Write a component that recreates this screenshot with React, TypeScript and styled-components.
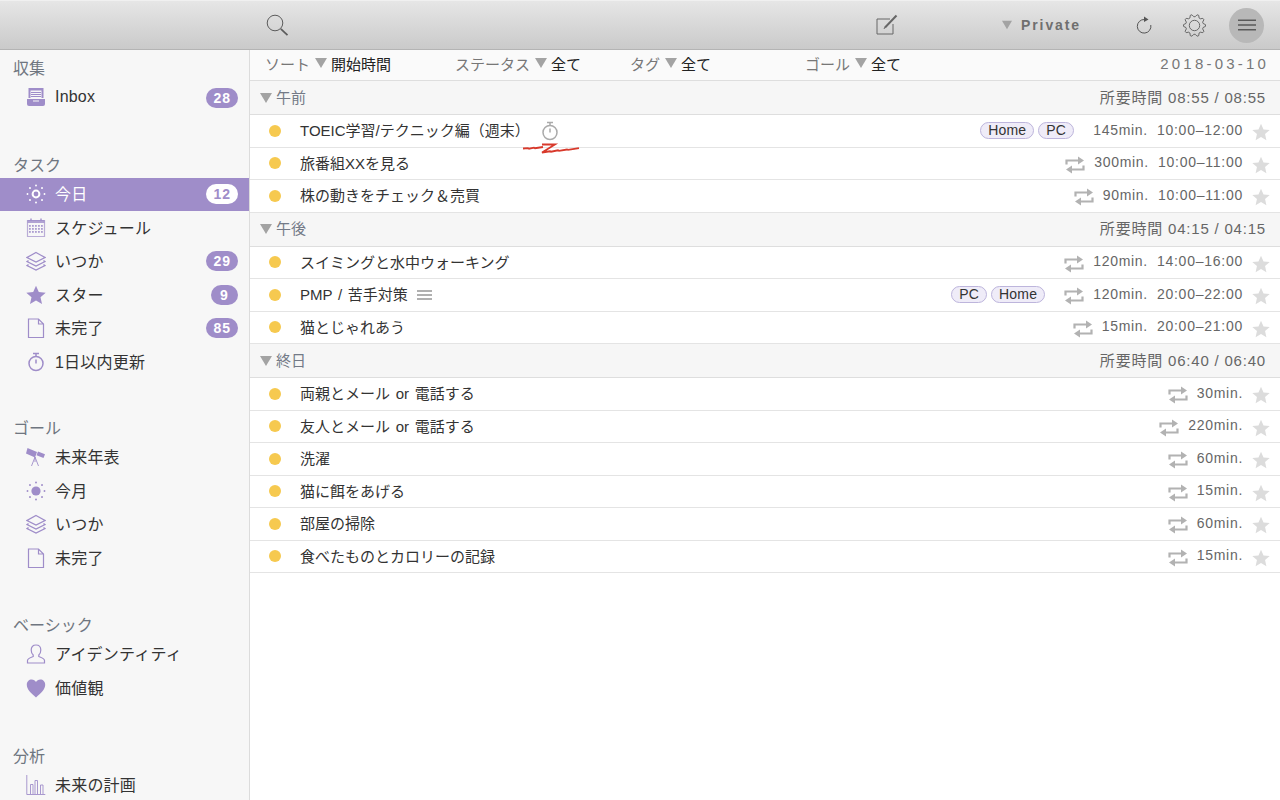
import React from 'react';
import styled, {createGlobalStyle} from 'styled-components';

const PURPLE = '#9f8dc9';
const FONT = `"Liberation Sans", "Noto Sans CJK JP", sans-serif`;

type IconName = 'inbox' | 'sun' | 'calendar' | 'layers' | 'star' | 'file' | 'timer' | 'scope' | 'sunDot' | 'user' | 'heart' | 'bars';

function NavIcon({name, color = PURPLE}: {name: IconName; color?: string}) {
  const line = {fill: 'none', stroke: color, strokeWidth: 1.2};
  return (
    <svg width="20" height="20" viewBox="0 0 20 20">
      {name === 'inbox' && (
        <>
          <path d="M2.500 0h15v11h-15z" fill={color}/>
          <path d="M4.500 2.500h11v8h-11z" fill="#f7f7f7"/>
          <path d="M5 4.500h10M5 6.500h10M5 8.500h10" stroke={color} strokeWidth={1.100}/>
          <path d="M1 11h18v5a2 2 0 0 1-2 2H3a2 2 0 0 1-2-2z" fill={color}/>
          <path d="M1 10.500h18" stroke="#f7f7f7" strokeWidth={1}/>
          <path d="M7 13h6" stroke="#f7f7f7" strokeWidth={1}/>
        </>
      )}
      {(name === 'sun' || name === 'sunDot') && (
        <>
          {name === 'sun'
            ? <circle cx="10" cy="10" r="3.400" fill="none" stroke={color} strokeWidth={2}/>
            : <circle cx="10" cy="10" r="4.600" fill={color}/>}
          {[0, 45, 90, 135, 180, 225, 270, 315].map(a => (
            <circle key={a} cx="10" cy="1.500" r="0.950" fill={color} transform={`rotate(${a} 10 10)`}/>
          ))}
        </>
      )}
      {name === 'calendar' && (
        <>
          <path d="M1.500 2.500h17v16h-17z" {...line} opacity={0.7}/>
          <path d="M1.500 2h17v3h-17z" fill={color} opacity={0.8}/>
          <path d="M5 .5v2M15 .5v2" stroke={color} strokeWidth={1.400}/>
          {[8, 11, 14].map(y => [4, 7, 10, 13, 16].map(x => (
            <rect key={`${x}-${y}`} x={x - 1} y={y - 1} width="1.800" height="1.800" fill={color} opacity={0.85}/>
          )))}
        </>
      )}
      {name === 'layers' && (
        <>
          <path d="M10 1.500L19 6.500 10 11 1 6.500z" {...line}/>
          <path d="M2.500 9.500L1 10.500 10 15l9-4.500-1.500-1M2.500 13.500L1 14.500 10 19l9-4.500-1.500-1" {...line}/>
        </>
      )}
      {name === 'star' && <path d="M10 .8l2.800 6.300 6.900.7-5.200 4.500 1.500 6.800L10 15.600l-6 3.500 1.500-6.800L.3 7.800l6.900-.7z" fill={color}/>}
      {name === 'file' && <path d="M2.500 1h10l5 5v13.500h-15zM12.500 1v5h5" {...line}/>}
      {name === 'timer' && (
        <>
          <circle cx="10" cy="11.500" r="7" fill="none" stroke={color} strokeWidth={1.500}/>
          <path d="M7 1.500h6M10 1.500v3M10 11.500V7.500" stroke={color} strokeWidth={1.500}/>
        </>
      )}
      {name === 'scope' && (
        <>
          <path d="M1.500 1l9.500 4-2 5.500L0 6.500z" fill={color}/>
          <path d="M12 4.500l7 2.800-1.500 3.700-7-2.800z" fill={color}/>
          <path d="M9 10l-3.500 9M9 10l3.500 9M9 10v5" stroke={color} strokeWidth={0.900} fill="none"/>
        </>
      )}
      {name === 'user' && <path d="M7.200 12.500V11C5.800 9.800 5.200 8 5.200 6 5.200 3 7 1 10 1s4.800 2 4.800 5c0 2-.6 3.800-2 5v1.500c2.500 1 5.700 1.800 5.700 4v2.500h-17V16.500c0-2.200 3.200-3 5.700-4z" {...line}/>}
      {name === 'heart' && <path d="M10 19.500C5 15 .8 11.500.8 6.800.8 3.500 3 1.500 5.700 1.500c1.900 0 3.400 1 4.300 2.600.9-1.600 2.400-2.600 4.300-2.600 2.700 0 4.900 2 4.900 5.300 0 4.700-4.200 8.200-9.200 12.700z" fill={color}/>}
      {name === 'bars' && <path d="M.8 0v19.500M.8 19.500h18.500M4.500 19V9.500h2.500V19M9 19V5.500h2.500V19M14.500 19V10H17v9" fill="none" stroke={color} strokeWidth={0.900}/>}
    </svg>
  );
}

function Triangle({size = 12}: {size?: number}) {
  return (
    <svg width={size} height={size - 2} viewBox="0 0 12 10">
      <path d="M0 0h12L6 10z" fill="#a3a3a3"/>
    </svg>
  );
}

function RepeatIcon() {
  return (
    <RepeatSvg width="20" height="18" viewBox="0 0 20 18">
      <path d="M1.500 8.500V4.500h12M18.500 9.500v4h-12" fill="none" stroke="#b2b2b2" strokeWidth={2.200}/>
      <path d="M13 .5L19 4.500l-6 4zM7 9.500L1 13.500l6 4z" fill="#b2b2b2"/>
    </RepeatSvg>
  );
}

function RowStar() {
  return (
    <svg width="18" height="18" viewBox="0 0 20 20">
      <path d="M10 .8l2.800 6.300 6.900.7-5.200 4.500 1.500 6.800L10 15.600l-6 3.500 1.500-6.800L.3 7.800l6.900-.7z" fill="#dcdcdc"/>
    </svg>
  );
}

function SearchIcon() {
  return (
    <svg width="23" height="23" viewBox="0 0 23 23" fill="none" stroke="#5c5c5c">
      <circle cx="9" cy="9" r="7.800" strokeWidth={1}/>
      <path d="M14.800 14.800l6.700 6.300" strokeWidth={1.700}/>
    </svg>
  );
}

function ComposeIcon() {
  return (
    <svg width="22" height="22" viewBox="0 0 22 22" fill="none" stroke="#666">
      <path d="M14 5H1v15h16V10" strokeWidth={1}/>
      <path d="M9 13.500L20.500 1.500" strokeWidth={2}/>
      <path d="M8 15l1-2" strokeWidth={1}/>
    </svg>
  );
}

function RefreshIcon() {
  return (
    <svg width="18" height="20" viewBox="0 0 18 20" fill="none">
      <path d="M9.500 4.500A6.800 6.800 0 1 0 15.800 10" stroke="#555" strokeWidth={1}/>
      <path d="M9 1.500l4.500 3L9 7z" fill="#555"/>
    </svg>
  );
}

// gear outline: a ring of rounded teeth around a plain circle
function GearIcon() {
  const teeth = 10;
  const points: string[] = [];
  for (let i = 0; i < teeth * 4; i++) {
    const r = i % 4 < 2 ? 11 : 8.800;
    const a = ((i - 0.5) / (teeth * 4)) * Math.PI * 2;
    points.push(`${(11.500 + r * Math.cos(a)).toFixed(2)},${(11.500 + r * Math.sin(a)).toFixed(2)}`);
  }
  return (
    <svg width="23" height="23" viewBox="0 0 23 23" fill="none" stroke="#5c5c5c" strokeWidth={0.900} strokeLinejoin="round">
      <polygon points={points.join(' ')}/>
      <circle cx="11.500" cy="11.500" r="5.200"/>
    </svg>
  );
}

function MenuIcon() {
  return (
    <svg width="18" height="12" viewBox="0 0 18 12">
      <path d="M0 1.200h18M0 6h18M0 10.800h18" stroke="#5a5a5a" strokeWidth={1.500}/>
    </svg>
  );
}

type NavEntry = {label: string; icon: IconName; count?: number; active?: boolean};
type NavGroup = {title: string; gap: number; items: NavEntry[]};

const NAV: NavGroup[] = [
  {title: '収集', gap: 1, items: [{label: 'Inbox', icon: 'inbox', count: 28}]},
  {title: 'タスク', gap: 33, items: [
    {label: '今日', icon: 'sun', count: 12, active: true},
    {label: 'スケジュール', icon: 'calendar'},
    {label: 'いつか', icon: 'layers', count: 29},
    {label: 'スター', icon: 'star', count: 9},
    {label: '未完了', icon: 'file', count: 85},
    {label: '1日以内更新', icon: 'timer'},
  ]},
  {title: 'ゴール', gap: 32, items: [
    {label: '未来年表', icon: 'scope'},
    {label: '今月', icon: 'sunDot'},
    {label: 'いつか', icon: 'layers'},
    {label: '未完了', icon: 'file'},
  ]},
  {title: 'ベーシック', gap: 33, items: [
    {label: 'アイデンティティ', icon: 'user'},
    {label: '価値観', icon: 'heart'},
  ]},
  {title: '分析', gap: 34, items: [{label: '未来の計画', icon: 'bars'}]},
];

type Task = {title: string; tags?: string[]; repeat?: boolean; min: string; time?: string; timer?: boolean; note?: boolean};
type TaskGroup = {name: string; total: string; tasks: Task[]};

const GROUPS: TaskGroup[] = [
  {name: '午前', total: '所要時間 08:55 / 08:55', tasks: [
    {title: 'TOEIC学習/テクニック編（週末）', tags: ['Home', 'PC'], min: '145min.', time: '10:00–12:00', timer: true},
    {title: '旅番組XXを見る', repeat: true, min: '300min.', time: '10:00–11:00'},
    {title: '株の動きをチェック＆売買', repeat: true, min: '90min.', time: '10:00–11:00'},
  ]},
  {name: '午後', total: '所要時間 04:15 / 04:15', tasks: [
    {title: 'スイミングと水中ウォーキング', repeat: true, min: '120min.', time: '14:00–16:00'},
    {title: 'PMP / 苦手対策', tags: ['PC', 'Home'], repeat: true, min: '120min.', time: '20:00–22:00', note: true},
    {title: '猫とじゃれあう', repeat: true, min: '15min.', time: '20:00–21:00'},
  ]},
  {name: '終日', total: '所要時間 06:40 / 06:40', tasks: [
    {title: '両親とメール or 電話する', repeat: true, min: '30min.'},
    {title: '友人とメール or 電話する', repeat: true, min: '220min.'},
    {title: '洗濯', repeat: true, min: '60min.'},
    {title: '猫に餌をあげる', repeat: true, min: '15min.'},
    {title: '部屋の掃除', repeat: true, min: '60min.'},
    {title: '食べたものとカロリーの記録', repeat: true, min: '15min.'},
  ]},
];

const FILTERS = [
  {label: 'ソート', value: '開始時間', width: 190},
  {label: 'ステータス', value: '全て', width: 175},
  {label: 'タグ', value: '全て', width: 175},
  {label: 'ゴール', value: '全て', width: 200},
];

export default function App() {
  return (
    <Shell>
      <GlobalStyle/>
      <Toolbar>
        <SearchSlot><SearchIcon/></SearchSlot>
        <ComposeSlot><ComposeIcon/></ComposeSlot>
        <Workspace><Triangle/>Private</Workspace>
        <RefreshSlot><RefreshIcon/></RefreshSlot>
        <GearSlot><GearIcon/></GearSlot>
        <MenuButton><MenuIcon/></MenuButton>
      </Toolbar>
      <Body>
        <Sidebar>
          {NAV.map(group => (
            <NavSection key={group.title} $gap={group.gap}>
              <NavTitle>{group.title}</NavTitle>
              {group.items.map(item => (
                <NavItem key={item.label} $active={item.active}>
                  <NavIconSlot><NavIcon name={item.icon} color={item.active ? '#fff' : PURPLE}/></NavIconSlot>
                  <NavLabel>{item.label}</NavLabel>
                  {item.count !== undefined && <Badge $active={item.active}>{item.count}</Badge>}
                </NavItem>
              ))}
            </NavSection>
          ))}
        </Sidebar>
        <Content>
          <FilterBar>
            {FILTERS.map(f => (
              <Filter key={f.label} $width={f.width}>
                <FilterLabel>{f.label}</FilterLabel>
                <Triangle/>
                <FilterValue>{f.value}</FilterValue>
              </Filter>
            ))}
            <DateText>2018-03-10</DateText>
          </FilterBar>
          {GROUPS.map(group => (
            <section key={group.name}>
              <GroupHeader>
                <GroupMark><Triangle/></GroupMark>
                <GroupName>{group.name}</GroupName>
                <GroupTotal>{group.total}</GroupTotal>
              </GroupHeader>
              {group.tasks.map(task => (
                <TaskRow key={task.title}>
                  <Dot/>
                  <TaskTitle>{task.title}</TaskTitle>
                  {task.timer && (
                    <TimerSlot>
                      <NavIcon name="timer" color="#aaa"/>
                      <Squiggle width="60" height="12" viewBox="0 0 60 12">
                        <path d="M1 6.500l5-.4 1 .6 5-1 1 .5 8-1.200M20 2.500h13L20 10.500l8-1.200 1 .4 7-1.400 1 .5 8-1.300 1 .4 11-1.800" fill="none" stroke="#d8392b" strokeWidth={1.800}/>
                      </Squiggle>
                    </TimerSlot>
                  )}
                  {task.note && <NoteLines/>}
                  <RowRight>
                    {task.tags && (
                      <Tags $spaced={task.repeat}>
                        {task.tags.map(t => <Tag key={t}>{t}</Tag>)}
                      </Tags>
                    )}
                    {task.repeat && <RepeatIcon/>}
                    <Minutes>{task.min}</Minutes>
                    {task.time && <TimeRange>{task.time}</TimeRange>}
                    <StarSlot><RowStar/></StarSlot>
                  </RowRight>
                </TaskRow>
              ))}
            </section>
          ))}
        </Content>
      </Body>
    </Shell>
  );
}

const GlobalStyle = createGlobalStyle`
  html, body {
    margin: 0;
    height: 100%;
    background: #fff;
    font-family: ${FONT};
    color: #333;
  }
`;

const Shell = styled.div`
  height: 100vh;
  display: flex;
  flex-direction: column;
  overflow: hidden;
`;

const Toolbar = styled.header`
  flex: none;
  box-sizing: border-box;
  height: 50px;
  display: flex;
  align-items: center;
  background: linear-gradient(#e6e6e6, #cacaca);
  border-top: 1px solid #f0f0f0;
  border-bottom: 1px solid #b4b4b4;
`;

const SearchSlot = styled.div`
  display: flex;
  margin-left: 266px;
`;

const ComposeSlot = styled.div`
  display: flex;
  margin-left: 587px;
  margin-right: 104px;
`;

const Workspace = styled.div`
  display: flex;
  align-items: center;
  gap: 9px;
  width: 79px;
  font-size: 14px;
  font-weight: bold;
  letter-spacing: 1.900px;
  color: #6f6f6f;
`;

const RefreshSlot = styled.div`
  display: flex;
  margin-left: 54px;
`;

const GearSlot = styled.div`
  display: flex;
  margin-left: 30px;
`;

const MenuButton = styled.div`
  display: flex;
  align-items: center;
  justify-content: center;
  width: 35px;
  height: 35px;
  margin-left: 23px;
  border-radius: 50%;
  background: #b8b8b8;
`;

const Body = styled.div`
  flex: 1;
  display: flex;
  min-height: 0;
`;

const Sidebar = styled.nav`
  flex: none;
  box-sizing: border-box;
  width: 250px;
  background: #f7f7f7;
  border-right: 1px solid #dcdcdc;
  overflow: hidden;
`;

const NavSection = styled.div<{$gap: number}>`
  margin-top: ${p => p.$gap}px;
`;

const NavTitle = styled.div`
  box-sizing: border-box;
  height: 30px;
  padding: 7px 0 0 13px;
  font-size: 16px;
  line-height: 22px;
  color: #6f7680;
`;

const NavItem = styled.div<{$active?: boolean}>`
  height: 33.500px;
  display: flex;
  align-items: center;
  padding: 0 11px 0 26px;
  font-size: 16px;
  color: ${p => (p.$active ? '#fff' : '#333')};
  background: ${p => (p.$active ? PURPLE : 'transparent')};
`;

const NavIconSlot = styled.span`
  display: flex;
  width: 29px;
`;

const NavLabel = styled.span`
  flex: 1;
  letter-spacing: 0.200px;
  padding-bottom: 2px;
`;

const Badge = styled.span<{$active?: boolean}>`
  min-width: 13px;
  height: 20px;
  padding: 0 7px;
  border-radius: 10px;
  text-align: center;
  font-size: 14px;
  line-height: 20px;
  font-weight: bold;
  letter-spacing: 1px;
  background: ${p => (p.$active ? '#fff' : PURPLE)};
  color: ${p => (p.$active ? PURPLE : '#fff')};
`;

const Content = styled.main`
  flex: 1;
  min-width: 0;
`;

const FilterBar = styled.div`
  box-sizing: border-box;
  height: 31px;
  display: flex;
  align-items: center;
  padding: 0 13px 4px 15px;
  background: #fafafa;
  border-bottom: 1px solid #dedede;
`;

const Filter = styled.div<{$width: number}>`
  display: flex;
  align-items: center;
  gap: 5px;
  width: ${p => p.$width}px;
`;

const FilterLabel = styled.span`
  font-size: 15px;
  color: #777;
`;

const FilterValue = styled.span`
  margin-left: -1px;
  font-size: 15px;
  color: #222;
`;

const DateText = styled.span`
  margin-left: auto;
  margin-right: -2px;
  font-size: 15px;
  letter-spacing: 3.200px;
  color: #777;
`;

const GroupHeader = styled.div`
  box-sizing: border-box;
  height: 34px;
  display: flex;
  align-items: center;
  padding: 0 14px 3px 10px;
  gap: 4px;
  background: #f6f6f6;
  border-bottom: 1px solid #dedede;
`;

const GroupMark = styled.span`
  display: flex;
  margin-top: 3px;
`;

const GroupName = styled.span`
  font-size: 15px;
  color: #737a87;
`;

const GroupTotal = styled.span`
  margin-left: auto;
  font-size: 15px;
  letter-spacing: 0.800px;
  color: #666;
`;

const TaskRow = styled.div`
  box-sizing: border-box;
  height: 32.500px;
  display: flex;
  align-items: center;
  padding: 0 10px 0 19px;
  background: #fff;
  border-bottom: 1px solid #e4e4e4;
`;

const Dot = styled.span`
  flex: none;
  width: 12px;
  height: 12px;
  margin-right: 19px;
  border-radius: 50%;
  background: #f6c94f;
`;

const TaskTitle = styled.span`
  font-size: 15px;
  word-spacing: 1.500px;
  padding-bottom: 2px;
  color: #333;
`;

const TimerSlot = styled.span`
  position: relative;
  display: flex;
  margin-left: 10px;
`;

const Squiggle = styled.svg`
  position: absolute;
  left: -18px;
  top: 21px;
`;

const NoteLines = styled.span`
  width: 15px;
  height: 10px;
  margin-left: 9px;
  border-top: 2px solid #b0b0b0;
  border-bottom: 2px solid #b0b0b0;
  box-sizing: border-box;
  background: linear-gradient(#b0b0b0, #b0b0b0) center / 100% 2px no-repeat;
`;

const RowRight = styled.div`
  margin-left: auto;
  display: flex;
  align-items: center;
  color: #666;
`;

const Tags = styled.div<{$spaced?: boolean}>`
  display: flex;
  gap: 4px;
  margin-right: ${p => (p.$spaced ? 19 : 10)}px;
`;

const Tag = styled.span`
  box-sizing: border-box;
  height: 17px;
  padding: 0 7px;
  border: 1px solid #bdb5dc;
  border-radius: 9px;
  background: #efecf8;
  font-size: 14px;
  letter-spacing: 0.200px;
  line-height: 15px;
  color: #333;
`;

const RepeatSvg = styled.svg`
  margin-top: 3px;
`;

const Minutes = styled.span`
  margin-left: 9px;
  padding-bottom: 2px;
  font-size: 14px;
  letter-spacing: 0.700px;
`;

const TimeRange = styled.span`
  margin-left: 9px;
  padding-bottom: 2px;
  font-size: 14px;
  letter-spacing: 0.750px;
`;

const StarSlot = styled.span`
  display: flex;
  margin: 3px 0 0 9px;
`;
